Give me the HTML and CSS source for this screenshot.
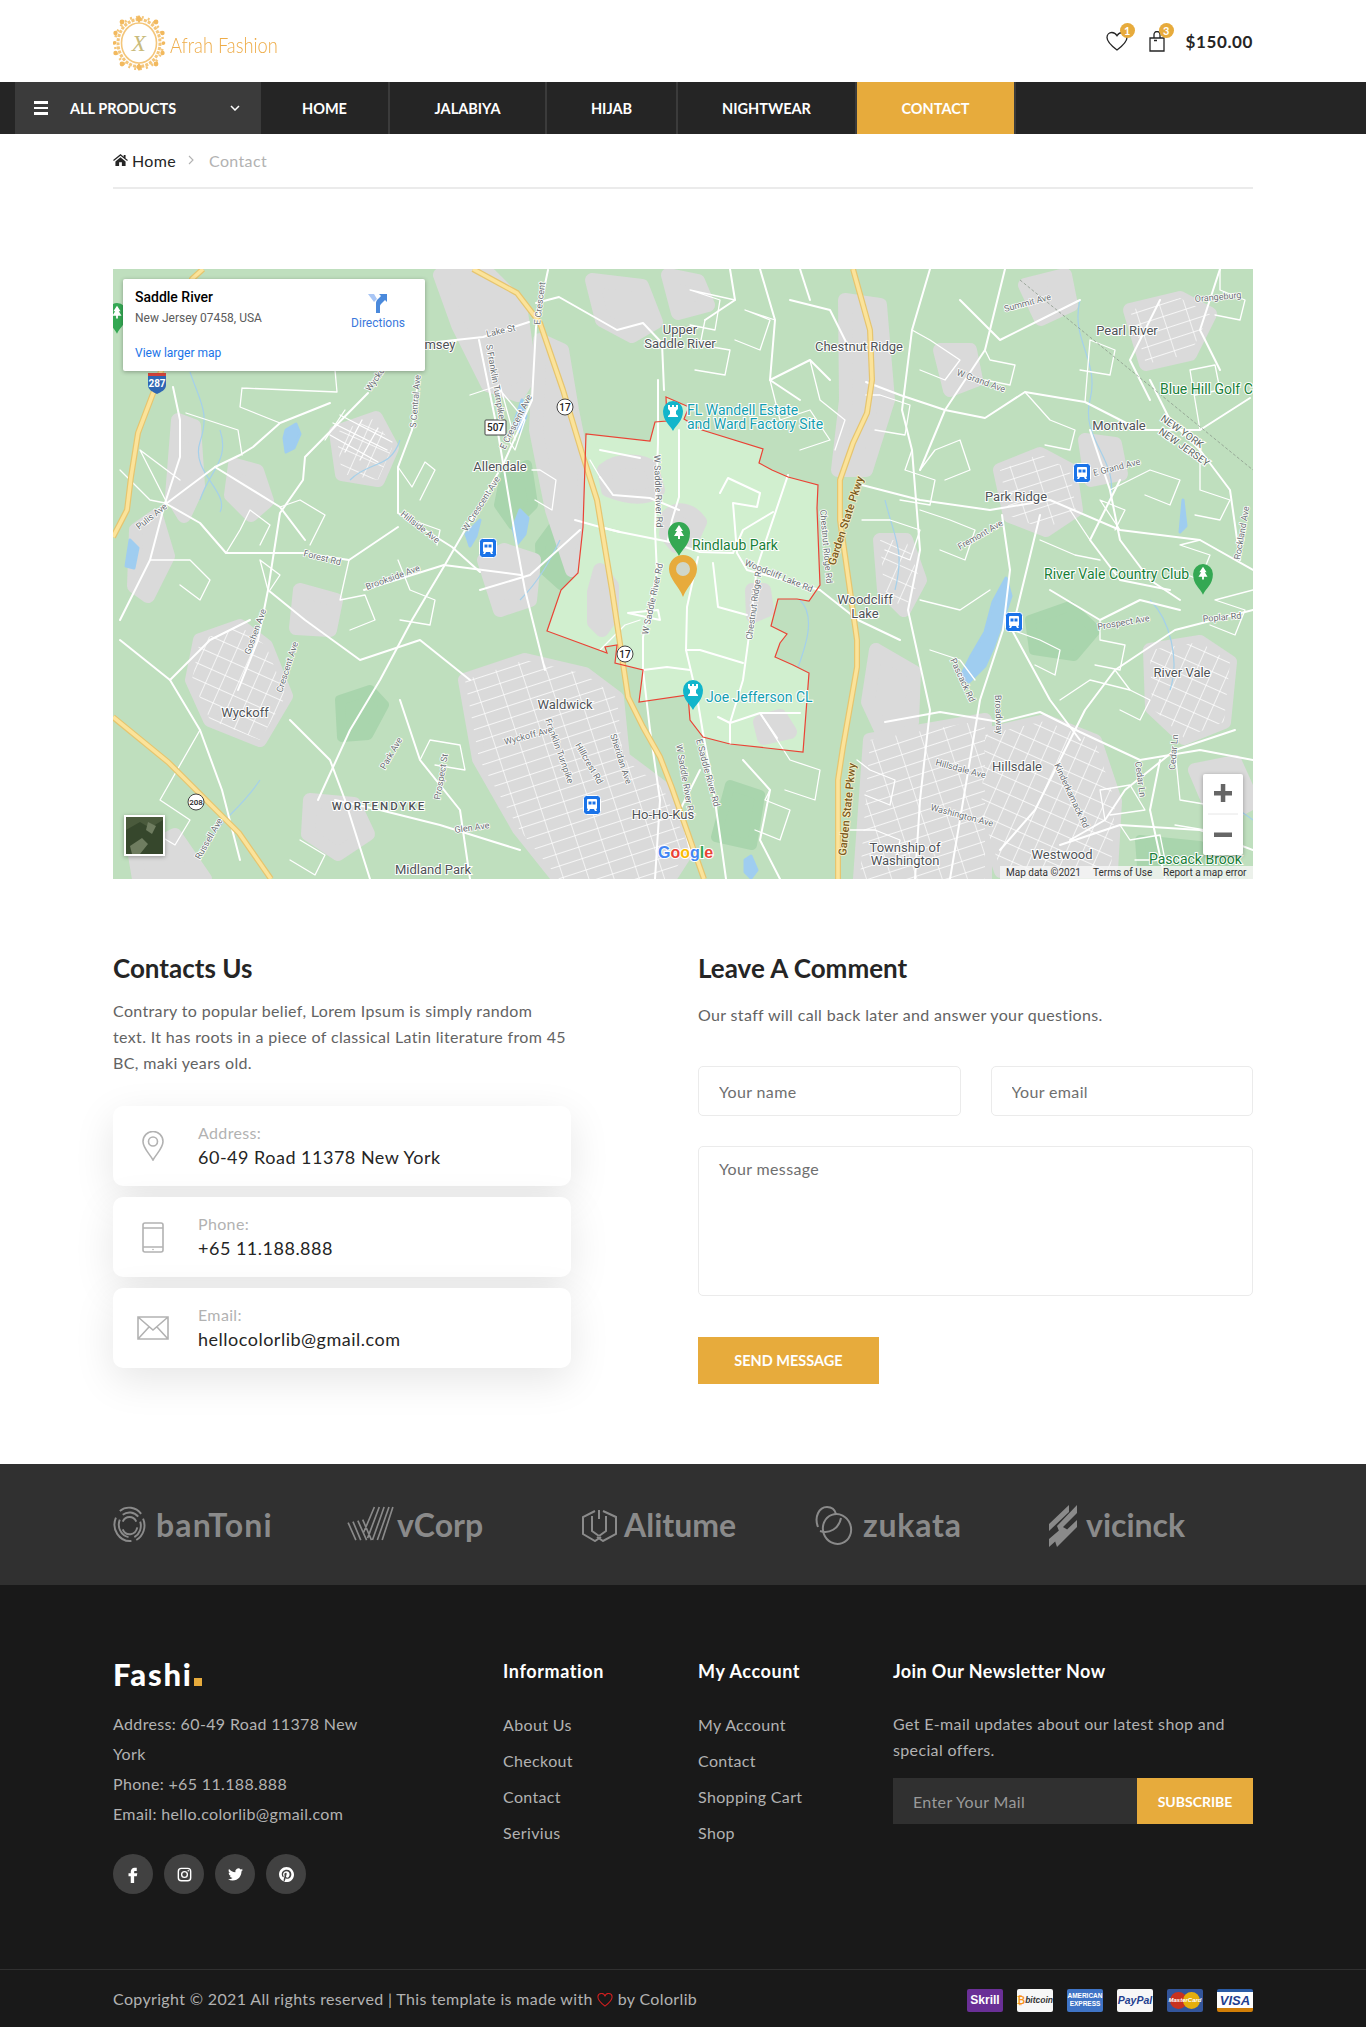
FILE: index.html
```html
<!DOCTYPE html>
<html lang="en">
<head>
<meta charset="utf-8">
<title>Afrah Fashion - Contact</title>
<link rel="stylesheet" href="styles.css">
</head>
<body>
<header class="top">
  <a class="brand" href="#">
    <svg class="brand-mark" viewBox="0 0 54 56" width="54" height="56" aria-hidden="true">
      <g fill="none" stroke="#f4c67a">
        <ellipse cx="26" cy="28" rx="21" ry="23.500" stroke-width="3" stroke-dasharray="3 1.200"/>
        <ellipse cx="26" cy="28" rx="17.500" ry="20" stroke-width="1.600" fill="#fff"/>
        <ellipse cx="26" cy="28" rx="24" ry="26" stroke-width="2.600" stroke-dasharray="2 4"/>
      </g>
      <g fill="#f2b95e">
        <path d="M26 0l3 4-3 4-3-4zM26 48l3 4-3 4-3-4z"/>
        <circle cx="2.500" cy="18" r="2.200"/><circle cx="49.500" cy="18" r="2.200"/><circle cx="2.500" cy="38" r="2.200"/><circle cx="49.500" cy="38" r="2.200"/><circle cx="9" cy="7" r="2.400"/><circle cx="43" cy="7" r="2.400"/><circle cx="9" cy="49" r="2.400"/><circle cx="43" cy="49" r="2.400"/><circle cx="1.500" cy="28" r="1.800"/><circle cx="50.500" cy="28" r="1.800"/>
      </g>
      <text class="brand-mono" x="26" y="36">X</text>
    </svg>
    <span class="brand-name">Afrah Fashion</span>
  </a>
  <div class="top-actions">
    <span class="icon-badge">
      <svg viewBox="0 0 22 20" width="22" height="20" aria-hidden="true"><path d="M11 19C5 14.500 1 11 1 6.500 1 3.500 3.200 1.500 5.800 1.500c2.200 0 4 1.200 5.200 3.300 1.200-2.100 3-3.300 5.200-3.300C18.800 1.500 21 3.500 21 6.500 21 11 17 14.500 11 19z" fill="none" stroke="#252525" stroke-width="1.300"/></svg>
      <b class="badge">1</b>
    </span>
    <span class="icon-badge bag">
      <svg viewBox="0 0 16 21" width="16" height="21" aria-hidden="true"><path d="M1 7h14v13H1zM5 7V3.500a3 3 0 0 1 6 0V7M5 9.500h3" fill="none" stroke="#252525" stroke-width="1.300"/></svg>
      <b class="badge">3</b>
    </span>
    <span class="price">$150.00</span>
  </div>
</header>

<nav class="nav">
  <div class="all-products">
    <span class="burger"><i></i><i></i><i></i></span>
    <span class="all-label">ALL PRODUCTS</span>
    <svg class="chev" viewBox="0 0 10 6" width="10" height="6" aria-hidden="true"><path d="M1 1l4 4 4-4" fill="none" stroke="#fff" stroke-width="1.500"/></svg>
  </div>
  <a class="nav-item nav-home" href="#">HOME</a>
  <a class="nav-item nav-jal" href="#">JALABIYA</a>
  <a class="nav-item nav-hij" href="#">HIJAB</a>
  <a class="nav-item nav-night" href="#">NIGHTWEAR</a>
  <a class="nav-item nav-contact" href="#">CONTACT</a>
</nav>

<div class="wrap">
  <div class="crumbs">
    <svg viewBox="0 0 16 13" width="15" height="12" aria-hidden="true"><path d="M8 0L0 6.500l.8 1L8 1.800l7.200 5.700.8-1-2.500-2V1h-2v2zM2.500 8v5h4V9h3v4h4V8L8 3.500z" fill="#252525"/></svg>
    <span class="crumb-home">Home</span>
    <svg viewBox="0 0 6 10" width="6" height="10" class="crumb-sep" aria-hidden="true"><path d="M1 1l4 4-4 4" fill="none" stroke="#b2b2b2" stroke-width="1.100"/></svg>
    <span class="crumb-cur">Contact</span>
  </div>

  <section class="map">
    <svg class="map-art" viewBox="113 269 1140 610" width="1140" height="610" role="img" aria-label="Map of Saddle River, New Jersey">
      <defs>
        <pattern id="grid" width="15" height="15" patternUnits="userSpaceOnUse" patternTransform="rotate(24)">
          <path d="M0 0H15M0 0V15" stroke="#fff" stroke-width="1.400" fill="none"/>
        </pattern>
        <pattern id="grid2" width="24" height="12" patternUnits="userSpaceOnUse" patternTransform="rotate(-18)">
          <path d="M0 0H24M0 0V12" stroke="#fff" stroke-width="1.300" fill="none"/>
        </pattern>
        <g id="bus"><rect x="-8.500" y="-9.500" width="17" height="19" rx="3" fill="#1a73e8" stroke="#fff"/><path d="M-4-6h8a1 1 0 0 1 1 1v8a1 1 0 0 1-1 1l1 2h-2l-1-2h-4l-1 2h-2l1-2a1 1 0 0 1-1-1v-8a1 1 0 0 1 1-1zM-3.500-3.500v3h3v-3zM.5-3.500v3h3v-3z" fill="#fff" fill-rule="evenodd"/></g>
        <g id="tower"><path d="M0 20C-3 14-10 10-10 0a10 10 0 0 1 20 0C10 10 3 14 0 20z" fill="#12b5cb"/><path d="M-5-6h2v2h2v-2h2v2h2v-2h2v4l-2 2v3l2 2v1H-5v-1l2-2v-3l-2-2z" fill="#fff"/></g>
        <g id="tree"><path d="M0 23C-3 16-11 12-11 0a11 11 0 0 1 22 0C11 12 3 16 0 23z" fill="#34a853"/><path d="M0-8l4 6H2l3 5H1v3h-2V3h-4l3-5h-2z" fill="#fff"/></g>
      </defs>
      <rect x="113" y="269" width="1140" height="610" class="land"/>

      <!-- darker parkland -->
      <g class="park">
        <path d="M540 545l22-30 15 0 2 50-18 20-20-18z"/>
        <path d="M505 475l22-10 6 40-20 20-14-20z"/>
        <path d="M340 700l30-10 14 15-16 30-26 2z"/>
        <path d="M1030 620l40-14 26 24-22 26-40-6z"/>
        <path d="M1140 840l60 6 43 33h-100z"/>
        <path d="M730 785l30 10-8 50-36-8z"/>
        <path d="M930 760l40 6 4 40-40 0z"/>
      </g>

      <!-- built up areas -->
      <g class="urban">
        <path d="M440 275l50 0 30 30 10 70-12 20-30-10-30-60z"/>
        <path d="M540 340l22 10 10 60 12 60 4 70-16 30-20-60-16-80z"/>
        <path d="M592 280l50 6 14 36-24 14-30-16z"/>
        <path d="M668 275l30 6 10 24-30 8z"/>
        <path d="M178 420l16 6 4 60-14 30-12-20z"/>
        <path d="M136 530l20-14 12 40-20 40-14-10z"/>
        <path d="M336 432l40-14 16 30-14 32-36-6z"/>
        <path d="M235 465l22 6 10 30-16 14-20-20z"/>
        <path d="M484 560l20-10 30 10-4 40-30 10z"/>
        <path d="M200 640l40-14 26 20 20 50-26 44-50-20-18-40z"/>
        <path d="M300 590l36 10-6 30-34-2z"/>
        <path d="M465 680l60-20 60 14 32 24 6 60 40 30 26 60-20 31h-110l-40-50-40-70z"/>
        <path d="M135 855l40-20 30 44h-66z"/>
        <path d="M310 800l44 4 14 30-30 20-30-20z"/>
        <path d="M845 300L880 305 888 400 866 470 838 470 846 400z"/>
        <path d="M880 540l26 0 14 40-16 30-20-20z"/>
        <path d="M876 650l38 22-2 50-30 10-14-30z"/>
        <path d="M870 740L985 720 985 879 860 879z"/>
        <path d="M1000 470l40-16 30 16 6 40-30 20-36-14z"/>
        <path d="M1085 440l30 4 6 30-30 6z"/>
        <path d="M985 735l60-14 50 20 20 60-4 70h-110l-20-60z"/>
        <path d="M1150 650l50-8 30 20-6 60-40 16-32-30z"/>
        <path d="M1130 310l50-12 30 16-20 40-44 10z"/>
        <path d="M1195 770l40-8 18 40-36 20z"/>
        <path d="M1025 285l40-10 6 30-30 14z"/>
        <path d="M940 350l30 0 6 30-26 10z"/>
      </g>
      <g class="street2">
        <path d="M465 680l60-20 60 14 32 24 6 60 40 30 26 60-20 31h-110l-40-50-40-70z"/>
        <path d="M1000 470l40-16 30 16 6 40-30 20-36-14z"/>
        <path d="M1130 310l50-12 30 16-20 40-44 10z"/>
        <path d="M870 740L985 720 985 879 860 879z"/>
      </g>
      <g class="street1">
        <path d="M985 735l60-14 50 20 20 60-4 70h-110l-20-60z"/>
        <path d="M200 640l40-14 26 20 20 50-26 44-50-20-18-40z"/>
        <path d="M1150 650l50-8 30 20-6 60-40 16-32-30z"/>
        <path d="M336 432l40-14 16 30-14 32-36-6z"/>
        <path d="M880 540l26 0 14 40-16 30-20-20z"/>
      </g>

      <!-- water -->
      <g class="water">
        <path d="M286 430l10-6 4 10-6 14-8 4-2-14z"/>
        <path d="M1006 578l5 18-8 24-10 28-8 18-16 16-8-6 10-20 14-24 8-30z"/>
        <path d="M522 400l4 16-6 16-6-8z"/>
        <path d="M520 510l8 8-3 16-8 10-4-16z"/>
        <path d="M480 520l-4 16-6 10-4-12z"/>
        <path d="M130 540l8 8-4 20-8-2z"/>
        <path d="M745 860l6-4 6 14-6 8-6-6z"/>
        <path d="M1183 500l3 26-6 6z"/>
      </g>
      <g class="stream">
        <path d="M190 372c10 30 20 40 10 70-10 30 30 50 20 70M400 440c-10 30-30 20-50 40M220 430c10 30-10 40-20 70M560 540c-10 20-20 40-40 60M660 440c10 30 30 40 20 70M655 640c-14-20-8-40 4-60M700 620c20 0 30-6 44-14M800 600c20 20 0 60-10 90M885 500c10 40 20 50 10 90M1080 300c-10 40 20 60 10 100s30 60 20 100M1150 600c20 20 30 60 20 90M1210 780c10 20 30 30 43 40M260 780c-20 30-40 40-50 60"/>
      </g>

      <!-- saddle river borough -->
      <path class="borough" d="M666 397L689 407 684 419 702 430 763 449 759 463 772 470 788 477 818 485 817 508 820 585 809 601 797 599 778 599 771 626 787 634 780 643 775 657 793 665 809 673 803 752 730 744 703 737 690 720 688 695 639 702 643 670 615 663 617 645 605 647 607 653 547 631 561 590 578 573 583 527 586 434 650 441 655 422 667 421Z"/>
      <g class="urban">
        <path d="M604 470c14-12 40-10 48-2l6 22c-12 10-30 8-50 0z"/>
        <path d="M668 516c10-10 24-6 32 6l-8 18-16 6-10-12z"/>
        <path d="M760 722l20-6 10 16-26 6z"/>
        <path d="M752 590h12l3 20-14 6z"/>
        <path d="M600 570l12 16 0 30-10 14-8-8 0-30z"/>
      </g>

      <!-- local roads -->
      <g class="roads">
        <path d="M368 393L305 457 303 480 280 513 268 590 258 640 238 690"/>
        <path d="M418 380L412 430 398 467 398 513 452 547 480 572"/>
        <path d="M165 503L200 523 226 553 303 553 349 560 398 527"/>
        <path d="M364 590L444 565 521 575"/>
        <path d="M479 340L498 433 517 547 525 590 545 670"/>
        <path d="M498 473L446 563 412 620 380 680 350 730 318 800"/>
        <path d="M548 270L536 327 532 400 502 467"/>
        <path d="M437 342L483 337 529 322"/>
        <path d="M536 303L559 297 617 330 643 323 662 343 664 390"/>
        <path d="M330 403L280 423 253 447 240 455 215 467 167 503"/>
        <path d="M173 387L180 420 180 457 165 503 150 560 120 620"/>
        <path d="M215 467L280 507 305 540"/>
        <path d="M480 590L530 575 580 530"/>
        <path d="M575 520L600 527 620 532"/>
        <path d="M268 590L305 620 360 660 420 640 470 680"/>
        <path d="M120 640L170 680 200 730 222 790 240 860"/>
        <path d="M170 680L210 640 250 620"/>
        <path d="M400 700L420 760 460 810 470 879"/>
        <path d="M335 800L380 810 440 825 520 850"/>
        <path d="M290 720L330 760 345 800 370 879"/>
        <path d="M658 380L658 443 655 530 657 573 643 637 643 670"/>
        <path d="M679 430L679 497 672 520 668 540"/>
        <path d="M698 557L687 607 686 650 697 697 703 733 712 780 722 850 726 879"/>
        <path d="M600 527L620 532 670 542 700 552 733 553 743 530 773 512"/>
        <path d="M788 475L757 567 748 643 743 680 730 723 730 744"/>
        <path d="M643 670L667 667 690 670M686 650L700 650 743 663"/>
        <path d="M720 493L728 478 760 493 757 507 733 503 737 553 747 570 820 590"/>
        <path d="M713 563L718 607 747 615"/>
        <path d="M600 477L613 495 650 498 679 510"/>
        <path d="M600 450L640 458"/>
        <path d="M628 613L660 620 658 610 628 613"/>
        <path d="M718 717L730 723 760 713 800 713M777 738L760 713"/>
        <path d="M643 670L650 730 660 800 655 879"/>
        <path d="M700 770L680 810 690 850"/>
        <path d="M743 760L770 790 760 840 780 879"/>
        <path d="M866 382L900 395 945 410 985 418 1025 392 1085 402 1140 430 1200 430 1250 398"/>
        <path d="M930 269L912 330 902 410 912 450 920 550 908 610 930 710 920 800 915 879"/>
        <path d="M1005 269L985 350 945 410 920 470"/>
        <path d="M960 300L1000 340 1040 320 1080 300"/>
        <path d="M862 485L920 500 990 510 1050 500 1120 530 1200 540 1253 570"/>
        <path d="M820 590L858 620 900 640"/>
        <path d="M1002 515L1010 570 1003 630 980 700 970 760 950 879"/>
        <path d="M1040 515L1012 630 1050 700 1080 740"/>
        <path d="M1253 610L1175 630 1115 670 1085 710 1055 770 1035 810 1000 850"/>
        <path d="M885 722L940 712 1000 722 1040 712 1080 732 1140 760 1200 750 1253 760"/>
        <path d="M1090 430L1110 490 1120 540 1150 580 1180 600"/>
        <path d="M1150 380L1170 420 1200 450 1230 490 1240 560"/>
        <path d="M1120 480L1090 540 1120 580 1170 590"/>
        <path d="M1160 300L1130 360 1150 400"/>
        <path d="M1220 269L1200 330 1220 370"/>
        <path d="M1235 730L1175 750 1125 790 1105 820 1070 840"/>
        <path d="M1050 590L1100 620 1140 600 1180 610"/>
        <path d="M1160 760L1150 810 1165 879"/>
        <path d="M1060 845L1120 825 1200 830 1253 850"/>
        <path d="M760 269L775 320 770 380 800 400M730 269L735 300 705 320"/>
        <path d="M790 300L830 310 850 350M770 380L810 360 830 380"/>
        <path d="M800 269L810 300"/>
      </g>
      <g class="roads thin">
        <path d="M242 388L337 392 335 370M242 388L240 407 280 423M186 413L238 430 242 455"/>
        <path d="M333 423L387 450M340 415L392 442M330 435L378 462M345 410L325 440M362 420L345 452M378 428L360 460"/>
        <path d="M398 467L412 487 425 462 435 470 420 500M398 513L412 520 440 530 437 545"/>
        <path d="M280 507L300 500 325 515 310 545M226 553L240 530 250 510 270 525 260 545"/>
        <path d="M167 503L140 450 180 480M120 470L150 500 165 503"/>
        <path d="M150 560L190 560 210 580 200 600 180 585M268 590L260 560 280 575 270 590M349 560L340 600 365 595 375 620 350 630M398 560L410 590 435 600 430 625 400 620"/>
        <path d="M498 433L500 390 525 420 515 450 495 420M470 395L500 385 515 440"/>
        <path d="M532 470L540 470 556 480 552 510 535 500"/>
        <path d="M866 395L880 395 910 405 905 435 875 430M912 450L905 470 935 480 930 505 900 500M862 520L890 520 920 530 910 560 885 550M920 470L935 450 960 440 970 470 945 480M920 510L950 520 975 530 965 560 940 550"/>
        <path d="M1120 530L1100 500 1125 510 1115 530M1110 490L1150 470 1180 480 1170 505 1145 495M1200 450L1200 490 1230 500 1220 520 1195 515M1200 540L1180 545 1210 555 1200 580 1175 570M1253 590L1215 600 1245 610 1235 635 1210 625"/>
        <path d="M1012 630L1040 640 1060 650 1055 675 1035 665M1100 620L1100 640 1125 645 1120 670 1095 665M1115 670L1130 690 1150 700 1140 720 1120 710"/>
        <path d="M1105 820L1100 790 1130 785 1145 810 1110 815M1175 750L1180 800 1210 805 1205 830 1175 825M1120 825L1130 840 1160 835 1165 860 1135 860"/>
        <path d="M857 760L870 770 895 780 890 805 865 795M850 830L875 830 900 840 895 865 870 855"/>
        <path d="M200 730L160 800 190 820 175 845 150 830M300 840L325 855 315 875 290 860M420 760L430 740 460 745 465 770 435 765"/>
        <path d="M1085 402L1090 340 1115 350 1110 375 1080 370M1200 430L1190 370 1215 365 1220 390 1195 395M912 330L930 340 960 360 945 380 920 370M985 350L990 360 1015 365 1010 385 985 380"/>
        <path d="M1025 392L1050 420 1075 430 1070 450 1045 445M1220 269L1220 290 1245 300 1240 320 1215 315"/>
        <path d="M735 300L690 290 720 300 715 330 690 325M775 320L745 310 770 320 760 350 735 340M705 320L700 345 730 350 725 375 695 370"/>
        <path d="M770 380L780 420 810 410 830 440 800 450M810 360L820 400 845 420 835 450"/>
        <path d="M760 713L790 760 820 770 815 800 785 790M770 790L765 800 790 810 780 840 755 830"/>
        <path d="M1070 510L1090 540M1040 540L1075 555 1100 560M1060 700L1090 680 1130 690M920 600L960 610 990 590M930 650L960 660 975 680M590 460L600 477M600 650L625 625 640 620"/>
      </g>

      <!-- highways -->
      <g class="hwy">
        <path d="M473 269L517 293 540 323 563 390 582 453 597 500 612 590 628 697 643 727 660 757 672 788 704 879"/>
        <path d="M853 269L870 330 872 380 867 413 853 443 840 480 840 520 857 640 857 667 843 747 838 780 838 879"/>
        <path d="M203 269L192 279 172 339 157 383 138 433 131 477 127 510 113 537"/>
        <path d="M113 717L168 762 239 833 271 879"/>
      </g>
      <g class="hwy-in">
        <path d="M473 269L517 293 540 323 563 390 582 453 597 500 612 590 628 697 643 727 660 757 672 788 704 879"/>
        <path d="M853 269L870 330 872 380 867 413 853 443 840 480 840 520 857 640 857 667 843 747 838 780 838 879"/>
        <path d="M203 269L192 279 172 339 157 383 138 433 131 477 127 510 113 537"/>
        <path d="M113 717L168 762 239 833 271 879"/>
      </g>

      <path class="boundary" d="M666 397L689 407 684 419 702 430 763 449 759 463 772 470 788 477 818 485 817 508 820 585 809 601 797 599 778 599 771 626 787 634 780 643 775 657 793 665 809 673 803 752 730 744 703 737 690 720 688 695 639 702 643 670 615 663 617 645 605 647 607 653 547 631 561 590 578 573 583 527 586 434 650 441 655 422 667 421Z"/>

      <!-- shields -->
      <g class="shield"><circle cx="565" cy="407" r="8"/><text x="565" y="411">17</text></g>
      <g class="shield"><circle cx="625" cy="654" r="8"/><text x="625" y="658">17</text></g>
      <g class="shield"><circle cx="196" cy="802" r="8"/><text x="196" y="805" class="s3">208</text></g>
      <g class="shield"><rect x="485" y="420" width="21" height="15" rx="1"/><text x="495.500" y="431">507</text></g>
      <g><path d="M148 373h18v12c0 5-5 7-9 9-4-2-9-4-9-9z" fill="#2f66b3"/><path d="M148 373h18v3h-18z" fill="#d6453b"/><text x="157" y="387" class="s-int">287</text></g>

      <!-- transit -->
      <use href="#bus" x="488" y="548"/>
      <use href="#bus" x="1082" y="473"/>
      <use href="#bus" x="1014" y="622"/>
      <use href="#bus" x="592" y="805"/>

      <!-- road labels -->
      <g class="rl">
        <text transform="translate(487 337) rotate(-13)">Lake St</text>
        <text transform="translate(486 345) rotate(80)">S Franklin Turnpike</text>
        <text transform="translate(540 325) rotate(-83)">E Crescent</text>
        <text transform="translate(505 450) rotate(-63)">E Crescent Ave</text>
        <text transform="translate(467 532) rotate(-58)">W Crescent Ave</text>
        <text transform="translate(416 428) rotate(-85)">S Central Ave</text>
        <text transform="translate(370 392) rotate(-55)">Wyckoff Ave</text>
        <text transform="translate(400 515) rotate(38)">Hillside Ave</text>
        <text transform="translate(303 556) rotate(14)">Forest Rd</text>
        <text transform="translate(367 590) rotate(-20)">Brookside Ave</text>
        <text transform="translate(139 530) rotate(-38)">Pulis Ave</text>
        <text transform="translate(654 455) rotate(88)">W Saddle River Rd</text>
        <text transform="translate(648 635) rotate(-78)">W Saddle River Rd</text>
        <text transform="translate(820 510) rotate(85)">Chestnut Ridge Rd</text>
        <text transform="translate(752 640) rotate(-82)">Chestnut Ridge Rd</text>
        <text transform="translate(744 565) rotate(22)">Woodcliff Lake Rd</text>
        <text transform="translate(696 740) rotate(75)">E Saddle River Rd</text>
        <text transform="translate(676 745) rotate(80)">W Saddle River Rd</text>
        <text transform="translate(545 720) rotate(70)">Franklin Turnpike</text>
        <text transform="translate(575 745) rotate(60)">Hillcrest Rd</text>
        <text transform="translate(610 735) rotate(72)">Sheridan Ave</text>
        <text transform="translate(1054 765) rotate(65)">Kinderkamack Rd</text>
        <text transform="translate(1135 762) rotate(82)">Cedar Ln</text>
        <text transform="translate(1098 630) rotate(-10)">Prospect Ave</text>
        <text transform="translate(995 695) rotate(88)">Broadway</text>
        <text transform="translate(950 660) rotate(65)">Pascack Rd</text>
        <text transform="translate(1005 312) rotate(-15)">Summit Ave</text>
        <text transform="translate(956 375) rotate(20)">W Grand Ave</text>
        <text transform="translate(1094 476) rotate(-14)">E Grand Ave</text>
        <text transform="translate(960 550) rotate(-30)">Fremont Ave</text>
        <text transform="translate(1240 560) rotate(-80)">Rockland Ave</text>
        <text transform="translate(1203 622) rotate(-5)">Poplar Rd</text>
        <text transform="translate(935 765) rotate(15)">Hillsdale Ave</text>
        <text transform="translate(930 810) rotate(15)">Washington Ave</text>
        <text transform="translate(1175 770) rotate(-85)">Cedar Ln</text>
        <text transform="translate(1195 302) rotate(-5)">Orangeburg</text>
        <text transform="translate(250 655) rotate(-70)">Goshen Ave</text>
        <text transform="translate(282 693) rotate(-72)">Crescent Ave</text>
        <text transform="translate(385 770) rotate(-60)">Park Ave</text>
        <text transform="translate(440 800) rotate(-80)">Prospect St</text>
        <text transform="translate(455 833) rotate(-8)">Glen Ave</text>
        <text transform="translate(505 745) rotate(-15)">Wyckoff Ave</text>
        <text transform="translate(200 860) rotate(-60)">Russell Ave</text>
      </g>
      <text class="rl hw" transform="translate(835 566) rotate(-72)">Garden State Pkwy</text>
      <text class="rl hw" transform="translate(846 856) rotate(-84)">Garden State Pkwy</text>

      <!-- places -->
      <g class="pl">
        <text x="680" y="334">Upper</text><text x="680" y="348">Saddle River</text>
        <text x="859" y="351">Chestnut Ridge</text>
        <text x="1127" y="335">Pearl River</text>
        <text x="1119" y="430">Montvale</text>
        <text x="1016" y="501">Park Ridge</text>
        <text x="865" y="604">Woodcliff</text><text x="865" y="618">Lake</text>
        <text x="1182" y="677">River Vale</text>
        <text x="1017" y="771">Hillsdale</text>
        <text x="1062" y="859">Westwood</text>
        <text x="905" y="852">Township of</text><text x="905" y="865">Washington</text>
        <text x="663" y="819">Ho-Ho-Kus</text>
        <text x="433" y="874">Midland Park</text>
        <text x="245" y="717">Wyckoff</text>
        <text x="565" y="709">Waldwick</text>
        <text x="500" y="471">Allendale</text>
        <text x="440" y="349" class="mid">msey</text>
        <text x="379" y="810" class="caps">WORTENDYKE</text>
      </g>
      <text class="pb-ny" transform="translate(1160 420) rotate(35)">NEW YORK</text>
      <text class="pb-ny" transform="translate(1158 433) rotate(35)">NEW JERSEY</text>
      <path class="statel" d="M1020 280L1253 470"/>

      <!-- poi -->
      <use href="#tower" x="673" y="411"/>
      <use href="#tree" x="679" y="533"/>
      <use href="#tower" x="693" y="690"/>
      <g transform="translate(1203 574) scale(.9)"><use href="#tree"/></g>
      <g transform="translate(117 313) scale(.9)"><use href="#tree"/></g>
      <g class="tl-teal">
        <text x="687" y="415">FL Wandell Estate</text>
        <text x="687" y="429">and Ward Factory Site</text>
        <text x="706" y="702">Joe Jefferson CL</text>
      </g>
      <g class="tl-green">
        <text x="692" y="550">Rindlaub Park</text>
        <text x="1044" y="579">River Vale Country Club</text>
        <text x="1160" y="394">Blue Hill Golf C</text>
        <text x="1149" y="864">Pascack Brook</text>
      </g>

      <path d="M683 597c-4-11-14-18-14-28a14 14 0 0 1 28 0c0 10-10 17-14 28z" fill="#e7ab3c"/>
      <circle cx="683" cy="569" r="7" fill="#cfd6c9"/>

      <!-- google mark -->
      <text class="gg" x="658" y="858"><tspan fill="#4285f4">G</tspan><tspan fill="#ea4335">o</tspan><tspan fill="#fbbc05">o</tspan><tspan fill="#4285f4">g</tspan><tspan fill="#34a853">l</tspan><tspan fill="#ea4335">e</tspan></text>

      <!-- satellite thumb -->
      <rect x="124" y="815" width="41" height="41" fill="#fff" class="ctl"/>
      <rect x="126" y="817" width="37" height="37" fill="#4a5a3c"/>
      <path d="M126 830l14-8 10 6 13-8v34h-37z" fill="#36472c"/>
      <path d="M130 846l12-8 6 6-8 10h-8zM148 822l8 4-4 8-6-4z" fill="#6f7d60"/>

      <!-- zoom -->
      <rect x="1203" y="774" width="40" height="81" rx="2" fill="#fff" class="ctl"/>
      <path d="M1208 814h30" stroke="#e6e6e6"/>
      <path d="M1214 791h18v4.500h-18zM1220.800 784h4.500v18h-4.500zM1214 832.500h18v4.500h-18z" fill="#666"/>

      <!-- attribution -->
      <rect x="1000" y="866" width="253" height="13" fill="#f5f5f5" fill-opacity=".82"/>
      <g class="attr">
        <text x="1006" y="876">Map data ©2021</text>
        <text x="1093" y="876">Terms of Use</text>
        <text x="1163" y="876">Report a map error</text>
      </g>
    </svg>

    <div class="map-card">
      <div class="map-card-main">
        <p class="mc-title">Saddle River</p>
        <p class="mc-addr">New Jersey 07458, USA</p>
        <a class="mc-link" href="#">View larger map</a>
      </div>
      <a class="mc-dir" href="#">
        <svg viewBox="0 0 20 20" width="20" height="20" aria-hidden="true"><path d="M0 1h6l3 5-3 3z" fill="#a9c6f5"/><path d="M8 20V10c0-2 1-3 2-4l3-3-2-2h8v8l-2-2-3 3c-1 1-2 2-2 3v7z" fill="#4a89dc"/></svg>
        <span>Directions</span>
      </a>
    </div>
  </section>

  <section class="contact">
    <div class="contact-left">
      <h2 class="sec-title">Contacts Us</h2>
      <p class="lead">Contrary to popular belief, Lorem Ipsum is simply random text. It has roots in a piece of classical Latin literature from 45 BC, maki years old.</p>
      <div class="cards">
        <div class="card">
          <span class="card-icon"><svg viewBox="0 0 22 30" width="22" height="30" aria-hidden="true"><path d="M11 29C7 22 1 17 1 10.500a10 10 0 0 1 20 0C21 17 15 22 11 29z" fill="none" stroke="#b2b2b2" stroke-width="1.600"/><circle cx="11" cy="10.500" r="4.500" fill="none" stroke="#b2b2b2" stroke-width="1.600"/></svg></span>
          <div><span class="card-label">Address:</span><span class="card-value">60-49 Road 11378 New York</span></div>
        </div>
        <div class="card">
          <span class="card-icon"><svg viewBox="0 0 22 31" width="22" height="31" aria-hidden="true"><rect x="1" y="1" width="20" height="29" rx="2" fill="none" stroke="#b2b2b2" stroke-width="1.600"/><path d="M1 6h20M1 25h20" stroke="#b2b2b2" stroke-width="1.400"/><circle cx="11" cy="27.500" r=".8" fill="#b2b2b2"/></svg></span>
          <div><span class="card-label">Phone:</span><span class="card-value">+65 11.188.888</span></div>
        </div>
        <div class="card">
          <span class="card-icon"><svg viewBox="0 0 32 24" width="32" height="24" aria-hidden="true"><path d="M1 1h30v22H1zM1 1l15 13L31 1M1 23l11-12M31 23L20 11" fill="none" stroke="#b2b2b2" stroke-width="1.600"/></svg></span>
          <div><span class="card-label">Email:</span><span class="card-value">hellocolorlib@gmail.com</span></div>
        </div>
      </div>
    </div>
    <form class="contact-right">
      <h2 class="sec-title">Leave A Comment</h2>
      <p class="lead lead-r">Our staff will call back later and answer your questions.</p>
      <div class="fields">
        <input class="field" type="text" placeholder="Your name" aria-label="Your name">
        <input class="field" type="email" placeholder="Your email" aria-label="Your email">
        <textarea class="field field-msg" placeholder="Your message" aria-label="Your message"></textarea>
      </div>
      <button class="send" type="button">SEND MESSAGE</button>
    </form>
  </section>
</div>

<section class="partners">
  <div class="partner p-ban">
    <svg viewBox="0 0 34 38" width="33" height="37" aria-hidden="true"><g fill="none" stroke="#8a8a8a" stroke-width="2"><path d="M7 5a16 17 0 0 1 22 3M31 13a16 17 0 0 1-7 22M19 36A16 17 0 0 1 3 12"/><path d="M10 9a12 13 0 0 1 16 2M28 16a12 13 0 0 1-6 16M16 32A12 13 0 0 1 7 14"/><path d="M10 16a8 9 0 0 1 14 0M25 22a8 9 0 0 1-15 2"/></g></svg>
    <span>banToni</span>
  </div>
  <div class="partner p-vc">
    <svg viewBox="0 0 48 38" width="47" height="37" aria-hidden="true"><g fill="none" stroke="#8a8a8a" stroke-width="1.700"><path d="M1 17l8 18M6 16l8 19M11 15l9 20M16 14l9 21M28 1L17 27M33 1L21 33M38 1L26 35M43 1L31 35M47 1L36 35"/></g></svg>
    <span>vCorp</span>
  </div>
  <div class="partner p-al">
    <svg viewBox="0 0 36 34" width="36" height="34" aria-hidden="true"><g fill="none" stroke="#8a8a8a" stroke-width="2"><path d="M14 3L2 9v17l12 7 6-4M22 3l13 6v17l-13 7-6-4"/><path d="M11 8v15l7 5M25 8v15l-7 5M18 2v9"/></g></svg>
    <span>Alitume</span>
  </div>
  <div class="partner p-zu">
    <svg viewBox="0 0 38 40" width="38" height="40" aria-hidden="true"><g fill="none" stroke="#8a8a8a" stroke-width="2"><ellipse cx="22" cy="24" rx="14" ry="15" transform="rotate(-20 22 24)"/><path d="M3 22C-1 12 4 2 12 2c5 0 8 3 9 7M5 26c9 3 19-2 21-13"/></g></svg>
    <span>zukata</span>
  </div>
  <div class="partner">
    <svg viewBox="0 0 28 44" width="28" height="44" aria-hidden="true"><path d="M0 21L20 2v7L0 28zM8 23L28 2v8L10 28zM0 36L14 24l5 3L0 44zM6 38l22-21v7L8 44z" fill="#8a8a8a"/></svg>
    <span>vicinck</span>
  </div>
</section>

<footer class="footer">
  <div class="foot-main">
    <div class="foot-about">
      <div class="foot-logo">Fashi<i class="dot"></i></div>
      <p class="foot-addr">Address: 60-49 Road 11378 New<br>York<br>Phone: +65 11.188.888<br>Email: hello.colorlib@gmail.com</p>
      <div class="social">
        <a href="#" aria-label="Facebook"><svg viewBox="0 0 24 24" width="18" height="18"><path d="M14 8h3V3.500h-3c-3 0-5 2.300-5 5.500v2H6v4h3v9h4.500v-9H17l.8-4h-4.300V9c0-.6.4-1 .5-1z"/></svg></a>
        <a href="#" aria-label="Instagram"><svg viewBox="0 0 24 24" width="15" height="15"><path d="M7 1h10a6 6 0 0 1 6 6v10a6 6 0 0 1-6 6H7a6 6 0 0 1-6-6V7a6 6 0 0 1 6-6zm0 2.300A3.700 3.700 0 0 0 3.300 7v10A3.700 3.700 0 0 0 7 20.700h10a3.700 3.700 0 0 0 3.700-3.700V7A3.700 3.700 0 0 0 17 3.300zM12 6.300a5.700 5.700 0 1 1 0 11.400 5.700 5.700 0 0 1 0-11.400zm0 2.200a3.500 3.500 0 1 0 0 7 3.500 3.500 0 0 0 0-7zM18 4.700a1.300 1.300 0 1 1 0 2.600 1.300 1.300 0 0 1 0-2.600z" fill-rule="evenodd"/></svg></a>
        <a href="#" aria-label="Twitter"><svg viewBox="0 0 24 24" width="15" height="15"><path d="M23.953 4.570a10 10 0 01-2.825.775 4.958 4.958 0 002.163-2.723c-.951.555-2.005.959-3.127 1.184a4.920 4.920 0 00-8.384 4.482C7.690 8.095 4.067 6.130 1.640 3.162a4.822 4.822 0 00-.666 2.475c0 1.710.870 3.213 2.188 4.096a4.904 4.904 0 01-2.228-.616v.060a4.923 4.923 0 003.946 4.827 4.996 4.996 0 01-2.212.085 4.936 4.936 0 004.604 3.417 9.867 9.867 0 01-6.102 2.105c-.390 0-.779-.023-1.170-.067a13.995 13.995 0 007.557 2.209c9.053 0 13.998-7.496 13.998-13.985 0-.210 0-.420-.015-.630A9.935 9.935 0 0024 4.590z"/></svg></a>
        <a href="#" aria-label="Pinterest"><svg viewBox="0 0 24 24" width="15" height="15"><path d="M12 0C5.400 0 0 5.400 0 12c0 5 3.100 9.400 7.600 11.100-.1-.9-.2-2.400 0-3.400.2-.9 1.400-5.900 1.400-5.900s-.4-.7-.4-1.800c0-1.700 1-2.900 2.200-2.900 1 0 1.500.8 1.500 1.700 0 1-.7 2.600-1 4-.3 1.200.6 2.200 1.800 2.200 2.100 0 3.800-2.200 3.800-5.500 0-2.900-2.100-4.900-5-4.900-3.400 0-5.400 2.600-5.400 5.200 0 1 .4 2.100.9 2.700.1.100.1.200.1.300l-.3 1.400c-.1.200-.2.300-.4.200-1.500-.7-2.400-2.900-2.400-4.700 0-3.800 2.800-7.300 8-7.300 4.200 0 7.400 3 7.400 7 0 4.200-2.600 7.500-6.300 7.500-1.200 0-2.400-.6-2.800-1.400l-.8 2.900c-.3 1.100-1 2.400-1.500 3.200 1.100.4 2.400.6 3.600.6 6.600 0 12-5.400 12-12S18.600 0 12 0z"/></svg></a>
      </div>
    </div>
    <div class="foot-col">
      <h3 class="foot-h">Information</h3>
      <a href="#">About Us</a><a href="#">Checkout</a><a href="#">Contact</a><a href="#">Serivius</a>
    </div>
    <div class="foot-col">
      <h3 class="foot-h">My Account</h3>
      <a href="#">My Account</a><a href="#">Contact</a><a href="#">Shopping Cart</a><a href="#">Shop</a>
    </div>
    <div class="foot-news">
      <h3 class="foot-h">Join Our Newsletter Now</h3>
      <p class="news-text">Get E-mail updates about our latest shop and special offers.</p>
      <div class="news-form">
        <input class="news-input" type="text" placeholder="Enter Your Mail" aria-label="Enter Your Mail">
        <button class="news-btn" type="button">SUBSCRIBE</button>
      </div>
    </div>
  </div>
  <div class="foot-bottom">
    <div class="foot-bottom-in">
      <p class="copy">Copyright © 2021 All rights reserved | This template is made with <svg viewBox="0 0 18 16" width="16" height="14" aria-hidden="true"><path d="M9 15C4 11 1 8.500 1 5a4 4 0 0 1 8-1 4 4 0 0 1 8 1c0 3.500-3 6-8 10z" fill="none" stroke="#d01f1f" stroke-width="1.200"/></svg> by Colorlib</p>
      <div class="pays">
        <span class="pay p-skrill">Skrill</span>
        <span class="pay p-btc"><i>₿</i>bitcoin</span>
        <span class="pay p-amex">AMERICAN<br>EXPRESS</span>
        <span class="pay p-paypal">PayPal</span>
        <span class="pay p-mc"><i class="mc-r"></i><i class="mc-y"></i><em>MasterCard</em></span>
        <span class="pay p-visa">VISA</span>
      </div>
    </div>
  </div>
</footer>
</body>
</html>
```

FILE: styles.css
```css
* { box-sizing: border-box; }
html, body { margin: 0; padding: 0; }
body { width: 1366px; background: #fff; color: #252525; font-family: "Lato", "Noto Sans", sans-serif; font-size: 16px; letter-spacing: .35px; }
a { color: inherit; text-decoration: none; }
p, h2, h3 { margin: 0; }

.top { height: 82px; padding: 15px 113px 0; display: flex; justify-content: space-between; }
.brand { display: flex; align-items: center; height: 55px; gap: 3px; }
.brand-mark { display: block; flex: none; }
.brand-mono { font-family: "Liberation Serif", serif; font-style: italic; font-size: 23px; fill: #c9bb7c; text-anchor: middle; }
.brand-name { display: inline-block; font-family: "Lato", sans-serif; font-weight: 300; font-size: 22px; letter-spacing: 0; color: #eeac48; padding-top: 3px; transform: scaleX(.83); transform-origin: left center; white-space: nowrap; }
.top-actions { display: flex; align-items: center; height: 52px; }
.icon-badge { position: relative; display: flex; margin-right: 21px; }
.icon-badge svg { display: block; }
.icon-badge.bag { margin-right: 21px; }
.badge { position: absolute; top: -8px; right: -7px; width: 15px; height: 15px; border-radius: 50%; background: #e7ab3c; color: #fff; font-size: 11px; font-weight: 700; letter-spacing: 0; line-height: 15px; text-align: center; }
.icon-badge.bag .badge { right: -9px; }
.price { font-weight: 700; font-size: 17px; letter-spacing: .6px; }

.nav { height: 52px; background: #252525; display: flex; padding-left: 15px; color: #fff; }
.all-products { width: 246px; background: #3b3b3b; display: flex; align-items: center; padding-left: 19px; font-weight: 700; font-size: 14.500px; letter-spacing: 0; }
.burger { display: flex; flex-direction: column; gap: 3px; width: 14px; margin-right: 22px; }
.burger i { display: block; height: 2.500px; background: #fff; }
.all-label { width: 160px; }
.nav-item { display: flex; align-items: center; justify-content: center; font-weight: 700; font-size: 14.500px; letter-spacing: 0; border-right: 2px solid #3b3b3b; }
.nav-home { width: 129px; }
.nav-jal { width: 157px; }
.nav-hij { width: 131px; }
.nav-night { width: 179px; }
.nav-contact { width: 159px; background: #e7ab3c; }

.wrap { padding: 0 113px; }
.crumbs { height: 55px; border-bottom: 2px solid #ebebeb; display: flex; align-items: center; padding-bottom: 1px; margin-top: 0; }
.crumb-home { margin-left: 4px; }
.crumb-sep { margin: 0 15px 0 12px; }
.crumb-cur { color: #b2b2b2; }

.map { position: relative; margin-top: 80px; height: 610px; overflow: hidden; }
.map-art { display: block; font-family: "Roboto", sans-serif; letter-spacing: 0; }
.land { fill: #bfdfbe; }
.park path { fill: #a9d5ad; stroke: #a9d5ad; stroke-width: 10; stroke-linejoin: round; }
.urban path { fill: #dadada; stroke: #dadada; stroke-width: 14; stroke-linejoin: round; }
.street1 path { fill: url(#grid); }
.street2 path { fill: url(#grid2); }
.water path { fill: #9fcdf0; stroke: #9fcdf0; stroke-width: 3; stroke-linejoin: round; }
.stream { fill: none; stroke: #a5d0ea; stroke-width: 1.200; }
.borough { fill: #d1efcf; }
.roads { fill: none; stroke: #fff; stroke-width: 2; stroke-linejoin: round; stroke-linecap: round; }
.roads.thin { stroke-width: 1.300; }
.hwy { fill: none; stroke: #e6c56f; stroke-width: 6; stroke-linejoin: round; }
.hwy-in { fill: none; stroke: #fbe39a; stroke-width: 3.600; stroke-linejoin: round; }
.boundary { fill: none; stroke: #ea4335; stroke-width: 1.200; }
.statel { stroke: #8d9a8d; stroke-width: .8; stroke-dasharray: 3 2; fill: none; }
.shield circle, .shield rect { fill: #fff; stroke: #444; stroke-width: 1; }
.shield text { font-size: 10px; font-weight: 500; text-anchor: middle; fill: #222; }
.shield text.s3 { font-size: 8px; }
.s-int { font-size: 10px; font-weight: 700; fill: #fff; text-anchor: middle; }
.rl text, text.rl { font-size: 9px; fill: #6a6f73; paint-order: stroke; stroke: #fff; stroke-width: 1.500px; text-anchor: start; }
text.hw { font-size: 11px; font-weight: 500; fill: #7a5a20; stroke: #fbf0c8; }
.pl text { font-size: 13px; fill: #4f5357; text-anchor: middle; paint-order: stroke; stroke: #fff; stroke-width: 2px; }
.pl text.caps { font-size: 11.500px; letter-spacing: 2px; font-weight: 500; }
.pb-ny { font-size: 10px; fill: #5a6560; paint-order: stroke; stroke: #fff; stroke-width: 2px; }
.tl-teal text { font-size: 14px; fill: #129eaf; paint-order: stroke; stroke: #fff; stroke-width: 2px; }
.tl-green text { font-size: 14px; fill: #188038; paint-order: stroke; stroke: #fff; stroke-width: 2px; }
.gg { font-family: "Liberation Sans", sans-serif; font-size: 16px; font-weight: 700; paint-order: stroke; stroke: #fff; stroke-width: 2px; }
.ctl { filter: drop-shadow(0 1px 2px rgba(0,0,0,.3)); }
.attr text { font-size: 10px; fill: #333; }

.map-card { position: absolute; left: 10px; top: 10px; width: 302px; height: 92px; background: #fff; box-shadow: 0 1px 4px rgba(0,0,0,.3); border-radius: 2px; display: flex; justify-content: space-between; padding: 10px 20px 0 12px; font-family: "Roboto", sans-serif; letter-spacing: 0; }
.mc-title { font-size: 14px; font-weight: 500; color: #000; line-height: 17px; }
.mc-addr { font-size: 12px; color: #5b5b5b; line-height: 15px; margin-top: 5px; }
.mc-link { display: block; font-size: 12px; color: #1a73e8; line-height: 15px; margin-top: 20px; }
.mc-dir { display: flex; flex-direction: column; align-items: center; font-size: 12px; color: #3a78dc; margin-top: 4px; gap: 3px; line-height: 15px; }
.mc-dir svg { display: block; }

.contact { display: grid; grid-template-columns: 458px 555px; justify-content: space-between; padding: 75px 0 80px; }
.sec-title { font-size: 26px; font-weight: 700; line-height: 28px; letter-spacing: 0; color: #252525; }
.lead { margin-top: 16px; line-height: 26px; color: #636363; width: 454px; }
.lead-r { width: auto; margin-top: 20px; }
.cards { display: flex; flex-direction: column; gap: 11px; margin-top: 30px; }
.card { height: 80px; background: #fff; border-radius: 10px; box-shadow: 0 12px 40px rgba(0,0,0,.1); display: flex; align-items: center; position: relative; }
.card-icon { width: 85px; display: flex; justify-content: center; padding-right: 5px; flex: none; }
.card-icon svg { display: block; }
.card-label { display: block; color: #b2b2b2; font-size: 16px; line-height: 20px; }
.card-value { display: block; font-size: 18px; line-height: 26px; letter-spacing: .5px; color: #252525; padding-top: 1px; }

.fields { display: grid; grid-template-columns: 1fr 1fr; gap: 30px 30px; margin-top: 38px; }
.field { height: 50px; border: 1px solid #ebebeb; border-radius: 5px; padding: 0 20px; font: inherit; letter-spacing: .35px; color: #636363; outline: none; background: #fff; }
.field-msg { grid-column: 1 / 3; height: 150px; padding-top: 12px; resize: none; display: block; }
.field::placeholder, .news-input::placeholder { color: #6f6f6f; opacity: 1; }
.send { display: block; margin-top: 41px; width: 181px; height: 47px; background: #e7ab3c; border: 0; color: #fff; font: 700 14.500px "Lato", sans-serif; padding: 0; }

.partners { background: #303030; height: 121px; display: grid; grid-template-columns: repeat(5, 234px); padding-left: 113px; }
.partner { display: flex; align-items: center; gap: 9px; color: #8a8a8a; font-size: 32px; font-weight: 700; letter-spacing: 0; }
.partner svg { display: block; flex: none; }
.p-ban { gap: 10px; letter-spacing: 1.200px; }
.p-vc { gap: 3px; }
.p-al { gap: 7px; }
.p-zu { gap: 10px; letter-spacing: .8px; }

.footer { background: #191919; height: 442px; color: #b2b2b2; }
.foot-main { height: 384px; padding: 75px 113px 0; display: grid; grid-template-columns: 390px 195px 195px 360px; }
.foot-logo { position: relative; color: #fff; font-size: 31px; font-weight: 900; line-height: 30px; letter-spacing: 1.800px; margin-top: -1px; display: flex; align-items: baseline; }
.dot { display: inline-block; width: 8px; height: 8px; background: #e7ab3c; margin-left: 1px; }
.foot-addr { line-height: 30px; margin-top: 20px; }
.social { display: flex; gap: 11px; margin-top: 25px; }
.social a { width: 40px; height: 40px; border-radius: 50%; background: #414141; display: flex; align-items: center; justify-content: center; }
.social svg { display: block; fill: #fff; }
.foot-h { font-size: 18px; font-weight: 700; line-height: 20px; color: #fff; letter-spacing: .6px; margin-bottom: 26px; padding-top: 1px; }
.foot-news .foot-h { letter-spacing: .4px; }
.foot-col a { display: block; line-height: 36px; }
.foot-news .foot-h { margin-bottom: 31px; }
.news-text { line-height: 26px; margin-top: -1px; width: 350px; }
.news-form { display: flex; height: 46px; margin-top: 15px; }
.news-input { width: 244px; height: 46px; background: #303030; border: 0; color: #b2b2b2; padding: 0 20px; font: inherit; letter-spacing: .35px; outline: none; }
.news-input::placeholder { color: #9a9a9a; }
.news-btn { width: 116px; height: 46px; background: #e7ab3c; color: #fff; border: 0; font: 700 14px "Lato", sans-serif; padding: 0; }

.foot-bottom { height: 58px; border-top: 1px solid #303030; }
.foot-bottom-in { height: 57px; padding: 0 113px; display: flex; justify-content: space-between; align-items: center; }
.copy svg { vertical-align: -2px; }
.pays { display: flex; gap: 14px; padding-top: 3px; }
.pay { position: relative; width: 36px; height: 23px; border-radius: 2px; display: flex; align-items: center; justify-content: center; overflow: hidden; font-family: "Liberation Sans", sans-serif; letter-spacing: 0; }
.p-skrill { background: #6a2f96; color: #fff; font-weight: 700; font-size: 12px; }
.p-btc { background: #f7f7f7; color: #333; font-size: 8.500px; font-weight: 700; font-style: italic; }
.p-btc i { color: #f7931a; font-style: normal; font-size: 10px; }
.p-amex { background: #3f74c6; color: #fff; font-size: 6.500px; line-height: 8px; font-weight: 700; text-align: center; }
.p-paypal { background: #f7f7f7; color: #1f3f8f; font-size: 10.500px; font-weight: 700; font-style: italic; }
.p-mc { background: #33559b; }
.mc-r, .mc-y { position: absolute; top: 3px; width: 17px; height: 17px; border-radius: 50%; }
.mc-r { left: 3px; background: #c8321f; }
.mc-y { right: 3px; background: #e5ae0c; }
.p-mc em { position: relative; font-size: 6px; font-weight: 700; color: #fff; white-space: nowrap; }
.p-visa { background: linear-gradient(#2a5ba5 0 3px, #fff 3px 19px, #d17e06 19px); color: #1f3f8f; font-size: 13px; font-weight: 700; font-style: italic; }
```
